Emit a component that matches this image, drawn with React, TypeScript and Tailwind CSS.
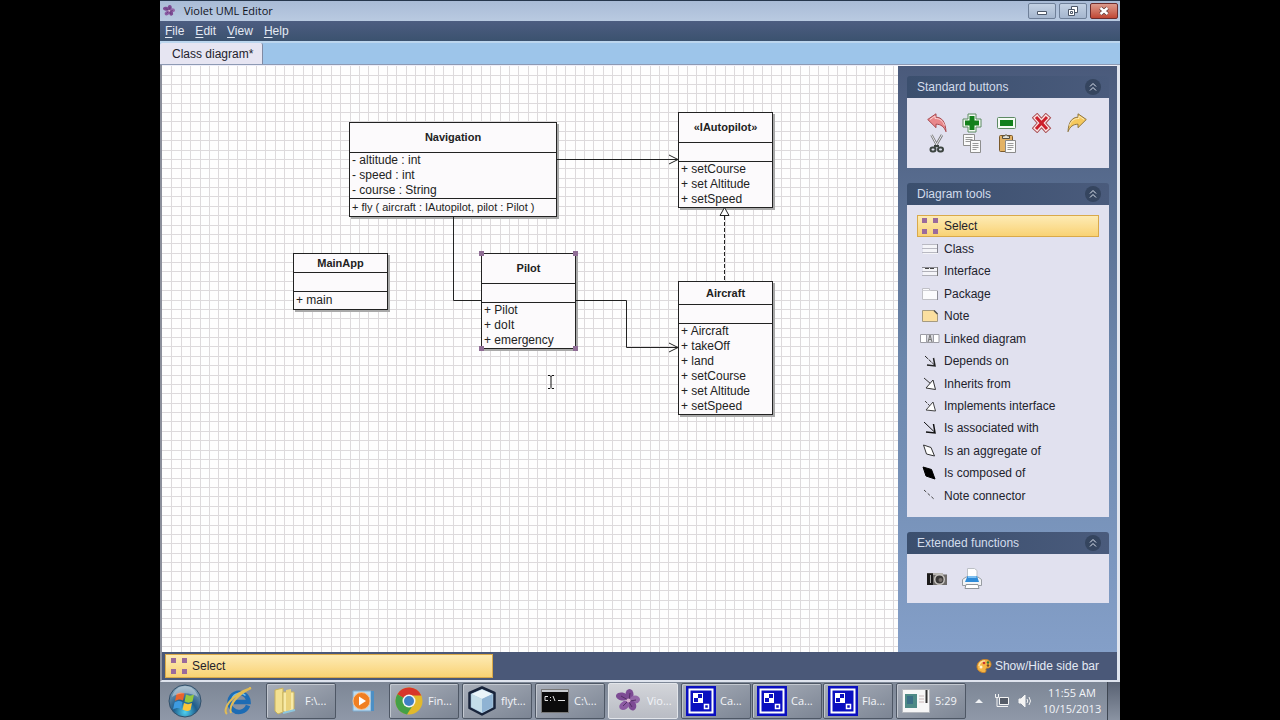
import React, { useState } from 'react';
import { clsx } from 'clsx';

interface UmlNode {
  id: string;
  name: string;
  position: string;
  header: string;
  attributes: string[];
  methods: string[];
  selected?: boolean;
}

const nodes: UmlNode[] = [
  {
    id: 'navigation',
    name: 'Navigation',
    position: 'left-[187px] top-[56px] w-[208px]',
    header: 'h-[30px]',
    attributes: ['- altitude : int', '- speed : int', '- course : String'],
    methods: ['+ fly ( aircraft : IAutopilot, pilot : Pilot )'],
  },
  {
    id: 'autopilot',
    name: '«IAutopilot»',
    position: 'left-[516px] top-[46px] w-[95px]',
    header: 'h-[30px]',
    attributes: [],
    methods: ['+ setCourse', '+ set Altitude', '+ setSpeed'],
  },
  {
    id: 'main-app',
    name: 'MainApp',
    position: 'left-[131px] top-[187px] w-[95px]',
    header: 'h-[19px]',
    attributes: [],
    methods: ['+ main'],
  },
  {
    id: 'pilot',
    name: 'Pilot',
    position: 'left-[319px] top-[187px] w-[95px]',
    header: 'h-[30px]',
    attributes: [],
    methods: ['+ Pilot', '+ doIt', '+ emergency'],
    selected: true,
  },
  {
    id: 'aircraft',
    name: 'Aircraft',
    position: 'left-[516px] top-[215px] w-[95px]',
    header: 'h-[23px]',
    attributes: [],
    methods: ['+ Aircraft', '+ takeOff', '+ land', '+ setCourse', '+ set Altitude', '+ setSpeed'],
  },
];

const GRID_STEP = 9.375;
const columns = Array.from({ length: 240 }, (_, i) => Math.floor(9.9 + i * GRID_STEP));
const rows = Array.from({ length: 160 }, (_, i) => Math.floor(9 + i * GRID_STEP));

/* ---------- Tool icons ---------- */

const SelectIcon = () => (
  <svg className="h-[18px] w-5" viewBox="0 0 20 18" fill="#9a6a9c">
    <path d="M2 1h5v5H2zM13 1h5v5h-5zM2 12h5v5H2zM13 12h5v5h-5z" />
  </svg>
);

const ClassIcon = () => (
  <svg className="h-[18px] w-5" viewBox="0 0 20 18" shapeRendering="crispEdges">
    <path d="M2.500 4.500h15v9h-15z" fill="#f4f4f8" />
    <path d="M2 4.500h15M2 8.500h15M2 12.500h15" stroke="#b9b9c2" />
    <path d="M17.500 4v9" stroke="#85858f" />
  </svg>
);

const InterfaceIcon = () => (
  <svg className="h-[18px] w-5" viewBox="0 0 20 18" shapeRendering="crispEdges">
    <path d="M2.500 4.500h15v9h-15z" fill="#f4f4f8" />
    <path d="M2 9.500h15M2 13.500h15" stroke="#b0b0b8" />
    <path d="M2 5.500h15" stroke="#8a8a92" />
    <path d="M5 6.500h10" stroke="#444" strokeDasharray="4 1" />
    <path d="M17.500 5v9" stroke="#777" />
  </svg>
);

const PackageIcon = () => (
  <svg className="h-[18px] w-5" viewBox="0 0 20 18">
    <path d="M2.500 14.500v-11h7v2h8v9z" fill="#fbfbfd" stroke="#c0c0c6" />
    <path d="M2.500 5.500h8" stroke="#d0d0d6" />
    <path d="M17.500 6v9" stroke="#8d8d96" />
  </svg>
);

const NoteIcon = () => (
  <svg className="h-[18px] w-5" viewBox="0 0 20 18">
    <path d="M2.500 3.500h12l3 3v8h-15z" fill="#fbdf9f" stroke="#a59a80" />
    <path d="M14 3.500l3.500 3.500" stroke="#555" strokeWidth="1.500" />
  </svg>
);

const LinkedIcon = () => (
  <svg className="h-[18px] w-5" viewBox="0 0 20 18">
    <path d="M.5 4.500h6v8h-6zM13.500 4.500h5.500v8h-5.500z" fill="#fff" stroke="#9c9ca4" />
    <path d="M6.500 4.500h7v8h-7z" fill="#d9d9de" stroke="#9c9ca4" />
    <path d="M8 12l2-7 2 7M9 9.500h2" fill="none" stroke="#777" />
  </svg>
);

const DependsIcon = () => (
  <svg className="h-[18px] w-5" viewBox="0 0 20 18" fill="none" stroke="#222">
    <path d="M5 4l10 9.500" strokeDasharray="4 1" />
    <path d="M13.500 6l1.500 8-8-1" strokeWidth="1.500" />
  </svg>
);

const InheritsIcon = () => (
  <svg className="h-[18px] w-5" viewBox="0 0 20 18" fill="none" stroke="#333">
    <path d="M4 3l7 6" />
    <path d="M13 5l2.500 9.500L6 13z" fill="#fff" />
  </svg>
);

const ImplementsIcon = () => (
  <svg className="h-[18px] w-5" viewBox="0 0 20 18" fill="none" stroke="#444">
    <path d="M5 4l5 5" strokeDasharray="3 1" />
    <path d="M13 5l2.500 9L6 13z" fill="#fff" />
  </svg>
);

const AssociatedIcon = () => (
  <svg className="h-[18px] w-5" viewBox="0 0 20 18" fill="none" stroke="#111">
    <path d="M4 3l11 10.500" />
    <path d="M13.500 5l1.500 9-9-1" strokeWidth="1.500" />
  </svg>
);

const AggregateIcon = () => (
  <svg className="h-[18px] w-5" viewBox="0 0 20 18">
    <path d="M3.500 3l7.500 2.500 3.500 8.500-8-2z" fill="#fff" stroke="#333" />
  </svg>
);

const ComposedIcon = () => (
  <svg className="h-[18px] w-5" viewBox="0 0 20 18">
    <path d="M3 3l8.500 2.500 3.500 9.500-9-3z" fill="#000" stroke="#000" />
  </svg>
);

const ConnectorIcon = () => (
  <svg className="h-[18px] w-5" viewBox="0 0 20 18">
    <path d="M4 3l11 10" stroke="#444" strokeDasharray="3 2" />
  </svg>
);

const tools = [
  { label: 'Select', Icon: SelectIcon },
  { label: 'Class', Icon: ClassIcon },
  { label: 'Interface', Icon: InterfaceIcon },
  { label: 'Package', Icon: PackageIcon },
  { label: 'Note', Icon: NoteIcon },
  { label: 'Linked diagram', Icon: LinkedIcon },
  { label: 'Depends on', Icon: DependsIcon },
  { label: 'Inherits from', Icon: InheritsIcon },
  { label: 'Implements interface', Icon: ImplementsIcon },
  { label: 'Is associated with', Icon: AssociatedIcon },
  { label: 'Is an aggregate of', Icon: AggregateIcon },
  { label: 'Is composed of', Icon: ComposedIcon },
  { label: 'Note connector', Icon: ConnectorIcon },
];

/* ---------- Standard button icons ---------- */

const UndoIcon = () => (
  <svg className="h-5 w-5" viewBox="0 0 20 20">
    <path d="M.7 6.500L9 .8v3.400c6 0 9.500 5 10 14.500-2-5-5-7.500-10-7.500v3.500z" fill="#e9878b" stroke="#a84a50" strokeLinejoin="round" />
    <path d="M3 6.500L8 3v2.500c5 0 8 2.500 9.500 7" fill="none" stroke="#fbd3d3" />
  </svg>
);

const ZoomInIcon = () => (
  <svg className="h-5 w-5" viewBox="0 0 20 20">
    <path d="M6 1h8v5h5v8h-5v5H6v-5H1V6h5z" fill="#f4fbf4" stroke="#5d8a63" strokeLinejoin="round" />
    <path d="M7.500 3h5v4.500H17v5h-4.500V17h-5v-4.500H3v-5h4.500z" fill="#12801c" />
  </svg>
);

const ZoomOutIcon = () => (
  <svg className="h-5 w-5" viewBox="0 0 20 20">
    <rect x=".5" y="4.500" width="18" height="11" rx="1" fill="#f4fbf4" stroke="#5d8a63" />
    <path d="M3 7h13v6H3z" fill="#12801c" />
  </svg>
);

const DeleteIcon = () => (
  <svg className="h-5 w-5" viewBox="0 0 20 20">
    <path d="M5 5l9 10M14 5L5 15" stroke="#a84c50" strokeWidth="7.500" strokeLinecap="square" />
    <path d="M5 5l9 10M14 5L5 15" stroke="#fbe6e6" strokeWidth="5.500" strokeLinecap="square" />
    <path d="M5 5l9 10M14 5L5 15" stroke="#cc1f2b" strokeWidth="3" strokeLinecap="square" />
  </svg>
);

const RedoIcon = () => (
  <svg className="h-5 w-5" viewBox="0 0 20 20">
    <path d="M19.300 6.500L11 .8v3.400C5 4.200 1.500 9.200 1 18.700c2-5 5-7.500 10-7.500v3.500z" fill="#f5c85c" stroke="#8f7640" strokeLinejoin="round" />
    <path d="M17 6.500L12 3v2.500C7 5.500 4 8 2.500 12.500" fill="none" stroke="#fdeab8" />
  </svg>
);

const CutIcon = () => (
  <svg className="h-5 w-5" viewBox="0 0 20 20" fill="none">
    <path d="M4.500 1l6.500 12M15 1L8 13" stroke="#777" strokeWidth="2.500" />
    <path d="M4.500 1l6.500 12M15 1L8 13" stroke="#e9e9ee" strokeWidth="1" />
    <rect x="3.500" y="13.500" width="5" height="4" rx="2" stroke="#3c4440" strokeWidth="2" />
    <rect x="11" y="13.500" width="5" height="4" rx="2" stroke="#3c4440" strokeWidth="2" />
    <path d="M7 12h5" stroke="#3c4440" strokeWidth="2" />
  </svg>
);

const CopyIcon = () => (
  <svg className="h-5 w-5" viewBox="0 0 20 20">
    <path d="M1.500.500h11v11h-11z" fill="#fafafa" stroke="#8e8e8e" />
    <path d="M3.500 3.500h7M3.500 5.500h7M3.500 7.500h7" stroke="#999" />
    <path d="M8.500 6.500h10v12h-10z" fill="#fafafa" stroke="#8e8e8e" />
    <path d="M10.500 9.500h6M10.500 11.500h6M10.500 13.500h6M10.500 15.500h4" stroke="#999" />
  </svg>
);

const PasteIcon = () => (
  <svg className="h-5 w-5" viewBox="0 0 20 20">
    <rect x="2.500" y="1.500" width="13" height="16" rx="1" fill="#e3b265" stroke="#7b5a2b" />
    <path d="M5.500 4.500V2h2L9 .5 10.500 2h2v2.500z" fill="#e4e4dc" stroke="#55503f" />
    <path d="M8.500 6.500h10v12h-10z" fill="#fafafa" stroke="#8a8a8a" />
    <path d="M10.500 9.500h6M10.500 11.500h6M10.500 13.500h6M10.500 15.500h4" stroke="#999" />
  </svg>
);

const CameraIcon = () => (
  <svg className="h-5 w-5" viewBox="0 0 20 20">
    <path d="M0 4h15v1.500h5V16H0z" fill="#6d6a68" />
    <path d="M0 4.500h6V16H0z" fill="#1c1b1b" />
    <path d="M3.500 6v8" stroke="#aaa" />
    <path d="M6 4h10v2H6z" fill="#b7b4b0" />
    <circle cx="12.500" cy="10.500" r="5.500" fill="#c9c6c2" />
    <circle cx="12.500" cy="10.500" r="4" fill="#3a3837" />
    <circle cx="13.500" cy="11" r="2" fill="#77706c" />
  </svg>
);

const PrinterIcon = () => (
  <svg className="h-[21px] w-[22px]" viewBox="0 0 22 21">
    <path d="M5 9L1.500 11.500v6h19v-6L17 9z" fill="#f2f4f6" stroke="#989da3" />
    <path d="M6.500 10.500V.5h7l2.500 2v8z" fill="#fff" stroke="#bcc0c6" />
    <path d="M6.500 8h9.500l2 6H4z" fill="#2f8bd8" />
    <path d="M7 8h8.500v2H7z" fill="#7fc0f0" />
    <path d="M5 16.500h12l1 4H4z" fill="#fff" stroke="#8f949a" />
  </svg>
);

const PaletteIcon = () => (
  <svg className="h-4 w-4" viewBox="0 0 16 16">
    <path d="M1 9C1 4 5 1.500 9 1.500s6 2 6 5-2 3.500-3.500 3.500-2 1-1.500 2.500S8.500 15 6.500 14.500 1 12.500 1 9z" fill="#f5b545" stroke="#c9822a" />
    <path d="M3 8c.5-3 3-5 6-5" stroke="#fde0a0" strokeWidth="1.500" fill="none" />
    <circle cx="5" cy="9" r="1.500" fill="#fff3cf" />
    <circle cx="8" cy="5" r="1.300" fill="#c33" />
    <circle cx="12" cy="4.500" r="1.300" fill="#357a3a" />
    <circle cx="12" cy="7.500" r="1.300" fill="#7a4b2a" />
  </svg>
);

const VioletIcon = ({ className }: { className: string }) => (
  <svg className={className} viewBox="0 0 24 24">
    <g fill="#7d4b94">
      <ellipse cx="6" cy="7.500" rx="6" ry="4" transform="rotate(10 6 7)" />
      <ellipse cx="13.500" cy="5.500" rx="4" ry="5.500" />
      <ellipse cx="19" cy="10.500" rx="5" ry="4" fill="#9468a8" />
      <ellipse cx="16" cy="16.500" rx="4" ry="5" transform="rotate(-20 16 16)" />
      <ellipse cx="8" cy="16.500" rx="5.500" ry="4" transform="rotate(-35 8 16)" fill="#8c5ba3" />
    </g>
    <path d="M12 11L5 7M13 11l1-7M14 12l6-1M13 13l3 5M11 13l-4 4" stroke="#543066" />
    <circle cx="12.500" cy="11.500" r="2" fill="#d8b2cf" />
  </svg>
);

const standardButtons = [
  { label: 'Undo', Icon: UndoIcon },
  { label: 'Zoom in', Icon: ZoomInIcon },
  { label: 'Zoom out', Icon: ZoomOutIcon },
  { label: 'Delete', Icon: DeleteIcon },
  { label: 'Redo', Icon: RedoIcon },
  { label: 'Cut', Icon: CutIcon },
  { label: 'Copy', Icon: CopyIcon },
  { label: 'Paste', Icon: PasteIcon },
];

const extendedButtons = [
  { label: 'Export image', Icon: CameraIcon },
  { label: 'Print', Icon: PrinterIcon },
];

/* ---------- Taskbar icons ---------- */

const StartOrb = () => (
  <svg className="h-[34px] w-[34px]" viewBox="0 0 34 34">
    <defs>
      <radialGradient id="orb" cx="50%" cy="85%" r="80%">
        <stop offset="0" stopColor="#4fd0f0" />
        <stop offset=".45" stopColor="#1f5d8c" />
        <stop offset="1" stopColor="#7f9fb6" />
      </radialGradient>
    </defs>
    <circle cx="17" cy="17" r="16" fill="url(#orb)" stroke="#33506a" />
    <path d="M8.500 10c3-2 5-2 8-.5l-1.500 7c-3-1.500-5-1-8 .5z" fill="#e8642c" />
    <path d="M18 10.500c3 1.500 5 1.500 8 0l-1.500 7c-3 1.500-5 1.500-8 0z" fill="#93c83e" />
    <path d="M6.500 18.500c3-1.500 5-2 8-.5l-1.500 7c-3-1.500-5-1-8 .5z" fill="#3d9be0" />
    <path d="M16 19c3 1.500 5 1.500 8 0l-1.500 7c-3 1.500-5 1-8-.5z" fill="#fbc63a" />
    <path d="M4 13C6 5 12 2 17 2s11 3 13 11C22 8 12 8 4 13z" fill="#fff" opacity=".35" />
  </svg>
);

const ExplorerIcon = () => (
  <svg className="h-[30px] w-[30px]" viewBox="0 0 30 30" fill="none">
    <path d="M25 19.500A9.500 9.500 0 1 1 25.500 16H11" stroke="#1d6cb4" strokeWidth="4.500" />
    <path d="M9 12.500a8.500 8.500 0 0 1 13.500-3" stroke="#6fc0ee" strokeWidth="1.500" />
    <path d="M4 28C-1 24 7 9 28 2c-13 6-23 17-20 25" stroke="#e0bb55" strokeWidth="2" />
  </svg>
);

const FolderIcon = () => (
  <svg className="h-7 w-7" viewBox="0 0 28 28">
    <path d="M3 3l8-2v24l-5 2-3-3z" fill="#f3e191" stroke="#c9b25c" />
    <path d="M11 5h11v18l-8 3-3-2z" fill="#f7eaa8" stroke="#c9b25c" />
    <path d="M14 3l5-1v20l-5 4z" fill="#ead27a" />
    <path d="M11 26l12-3" stroke="#8dc6de" strokeWidth="2" />
  </svg>
);

const MediaIcon = () => (
  <svg className="h-6 w-6" viewBox="0 0 24 24">
    <path d="M2 2h18v20H2z" fill="#bcdcf2" stroke="#7dabd0" />
    <path d="M20 2h3v20h-3z" fill="#4d8fc4" />
    <circle cx="10.500" cy="12" r="8.500" fill="#f07f22" stroke="#f8c18e" />
    <path d="M8 7.500l7 4.500-7 4.500z" fill="#fff" />
  </svg>
);

const ChromeIcon = () => (
  <svg className="h-7 w-7" viewBox="0 0 28 28">
    <circle cx="14" cy="14" r="13.500" fill="#e2b92c" />
    <path d="M14 14L2.300 7.250A13.500 13.500 0 0 1 26.300 8.500H14z" fill="#d8352b" />
    <path d="M14 14L2.300 7.250A13.500 13.500 0 0 0 12 27.400l6-9.400z" fill="#45a046" />
    <circle cx="14" cy="14" r="6.500" fill="#f4f4f4" />
    <circle cx="14" cy="14" r="5" fill="#3f7fc6" />
  </svg>
);

const CubeIcon = () => (
  <svg className="h-[30px] w-7" viewBox="0 0 28 30">
    <path d="M14 1.500L26.500 7v15L14 28.500 1.500 22V7z" fill="#a9c6dd" stroke="#18233a" strokeWidth="2.500" strokeLinejoin="round" />
    <path d="M14 3.500L24.500 8 14 13 3.500 8z" fill="#eaf4f9" />
    <path d="M14 13l10.500-5v13L14 26.500z" fill="#8fb3d3" />
    <path d="M3.500 8L14 13v13.500L3.500 21z" fill="#c4dde9" />
  </svg>
);

const ConsoleIcon = () => (
  <svg className="h-6 w-7" viewBox="0 0 28 24">
    <path d="M.5.500h27v23H.5z" fill="#0b0b0b" stroke="#777" />
    <path d="M1 1h26v2H1z" fill="#c9ccd0" />
    <path d="M7 7.500H4v4h3M9 8.500h1M9 11.500h1M12 7l2 5M17 11.500h7" stroke="#e4e4e4" fill="none" />
  </svg>
);

const CamIcon = () => (
  <svg className="h-[30px] w-[30px]" viewBox="0 0 30 30">
    <path d="M0 0h30v30H0z" fill="#0a0fc0" />
    <path d="M3.500 3.500h23v23h-23z" fill="none" stroke="#fff" strokeWidth="2" />
    <path d="M7 7h10v10H7z" fill="#fff" />
    <path d="M12 8h4v4h-4zM8 12h4v4H8z" fill="#0a0fc0" />
    <path d="M18.500 18.500h4v4h-4z" fill="none" stroke="#fff" strokeWidth="1.500" />
  </svg>
);

const RecorderIcon = () => (
  <svg className="h-6 w-7" viewBox="0 0 28 24">
    <path d="M.5.500h27v23H.5z" fill="#f7f7f7" stroke="#b5b8be" />
    <path d="M3 5h12v14H3z" fill="#4e8a86" />
    <path d="M5 7h6v8H5z" fill="#3b6f86" />
    <path d="M17 7h5M17 10h5M17 13h5" stroke="#c9b8b8" />
    <path d="M24.500 1v13" stroke="#333" strokeWidth="2" />
  </svg>
);

const windows = [
  { label: 'F:\\...', Icon: FolderIcon },
  { label: 'Fin...', Icon: ChromeIcon },
  { label: 'flyt...', Icon: CubeIcon },
  { label: 'C:\\...', Icon: ConsoleIcon },
  { label: 'Vio...', Icon: () => <VioletIcon className="h-6 w-6" />, active: true },
  { label: 'Ca...', Icon: CamIcon },
  { label: 'Ca...', Icon: CamIcon, grouped: true },
  { label: 'Fla...', Icon: CamIcon, grouped: true },
  { label: '5:29', Icon: RecorderIcon },
];

/* ---------- Pieces ---------- */

function Panel({ title, children }: { title: string; children: React.ReactNode }) {
  return (
    <section>
      <h2 className="flex h-[22px] items-center justify-between rounded-t-[3px] bg-gradient-to-r from-[#3b4f6e] to-[#4a5b7c] pr-2 pl-[10px] text-xs text-[#d3dcec]">
        {title}
        <button aria-label={`Collapse ${title}`} className="flex h-4 w-4 items-center justify-center rounded-full bg-[#35455f]">
          <svg className="h-[10px] w-[10px]" viewBox="0 0 10 10" fill="none" stroke="#dfe5f0">
            <path d="M2 4.500l3-3 3 3M2 8.500l3-3 3 3" />
          </svg>
        </button>
      </h2>
      <div className="bg-[#e1e1ef]">{children}</div>
    </section>
  );
}

function ClassBox({ node }: { node: UmlNode }) {
  const hasSignature = node.methods.some((method) => method.includes('('));

  return (
    <article className={clsx('absolute border border-[#222] bg-[#fcfafc] text-xs leading-[15px] text-[#222] shadow-[2px_2px_0_#a9a9a9]', node.position)}>
      <h3 className={clsx('flex items-center justify-center border-b border-[#222] text-[11px] font-bold', node.header)}>{node.name}</h3>
      <ul className="min-h-[19px] border-b border-[#222] pl-[2px] whitespace-nowrap">
        {node.attributes.map((attribute) => (
          <li key={attribute}>{attribute}</li>
        ))}
      </ul>
      <ul className={clsx('pl-[2px] leading-[15px] whitespace-nowrap', node.methods.length === 1 && 'py-px', hasSignature && 'text-[11px]')}>
        {node.methods.map((method) => (
          <li key={method}>{method}</li>
        ))}
      </ul>
      {node.selected && (
        <>
          <span className="absolute -top-[3px] -left-[3px] h-[5px] w-[5px] bg-[#8f6d95]" />
          <span className="absolute -top-[3px] -right-[3px] h-[5px] w-[5px] bg-[#8f6d95]" />
          <span className="absolute -bottom-[3px] -left-[3px] h-[5px] w-[5px] bg-[#8f6d95]" />
          <span className="absolute -right-[3px] -bottom-[3px] h-[5px] w-[5px] bg-[#8f6d95]" />
        </>
      )}
    </article>
  );
}

function DiagramCanvas() {
  return (
    <main className="relative min-w-0 flex-1 overflow-hidden bg-[#fefefe]">
      <svg className="absolute inset-0 h-full w-full" shapeRendering="crispEdges" stroke="#dddadc">
        {columns.map((x) => (
          <line key={x} x1={x + 0.5} x2={x + 0.5} y1="0" y2="100%" />
        ))}
        {rows.map((y) => (
          <line key={y} x1="0" x2="100%" y1={y + 0.5} y2={y + 0.5} />
        ))}
      </svg>

      {nodes.map((node) => (
        <ClassBox key={node.id} node={node} />
      ))}

      {/* Edges, arrow heads and the text pointer */}
      <svg className="pointer-events-none absolute inset-0 h-full w-full" fill="none" stroke="#222">
        <path d="M395 93.500H516" />
        <path d="M291.500 151V234.500H319" />
        <path d="M414 234.500H464.500V281.500H516" />
        <path d="M562.500 150V215" strokeDasharray="4 2" />
        <path d="M507 89L516 93.500L507 98" />
        <path d="M507 277L516 281.500L507 286" />
        <path d="M562.500 141.500L567 149.500H558z" fill="#fff" />
        <path d="M386 309.500h2l1 1 1-1h2M389 310v11M386 322.500h2l1-1 1 1h2" stroke="#111" />
      </svg>
    </main>
  );
}

function Taskbar() {
  return (
    <footer className="flex h-[38px] shrink-0 items-stretch bg-gradient-to-b from-[#7d8796] to-[#8f98a8] font-['Open_Sans','Noto_Sans',sans-serif] text-[11px] text-[#f2f4f8]">
      <button aria-label="Start" className="flex w-[50px] items-center justify-center">
        <StartOrb />
      </button>
      <button aria-label="Internet Explorer" className="flex w-[56px] items-center justify-center">
        <ExplorerIcon />
      </button>
      <div className="flex gap-[3px] py-px">
        {windows.map(({ label, Icon, active, grouped }, index) => (
          <React.Fragment key={index}>
            <button
              className={clsx(
                'flex w-[70px] items-center gap-1 rounded-[2px] border pl-1 whitespace-nowrap',
                grouped && '-ml-[2px]',
                active
                  ? 'border-[#e2e5ea] bg-gradient-to-b from-[#d3d5da] to-[#b9bcc4]'
                  : 'border-[#4e5765] bg-gradient-to-br from-[#a9afba] to-[#7c8594] shadow-[inset_1px_1px_0_#c3c8d0]',
              )}
            >
              <span className="flex w-[30px] shrink-0 justify-center">
                <Icon />
              </span>
              {label}
            </button>
            {index === 0 && (
              <button aria-label="Media Player" className="flex w-[47px] items-center justify-center">
                <MediaIcon />
              </button>
            )}
          </React.Fragment>
        ))}
      </div>
      <div className="flex flex-1 items-center justify-end gap-[7px] pr-1">
        <button aria-label="Show hidden icons" className="pr-1">
          <svg className="h-2 w-2" viewBox="0 0 8 8">
            <path d="M0 6l4-4 4 4z" fill="#f0f2f5" />
          </svg>
        </button>
        <svg className="h-4 w-4" viewBox="0 0 16 16" fill="none" stroke="#f4f4f4">
          <path d="M5.500 4.500h9v7h-9zM7 13.500h7" fill="#555c68" />
          <path d="M1.500 1v3.500h3V1M3 4.500v9h4" />
        </svg>
        <svg className="h-4 w-4" viewBox="0 0 16 16" fill="none" stroke="#f4f4f4">
          <path d="M2 6h2l4-4v12l-4-4H2z" fill="#f4f4f4" />
          <path d="M10 6q1.500 2 0 4M12 4q3 4 0 8" />
        </svg>
      </div>
      <time className="flex w-[70px] flex-col justify-center text-center leading-4">
        <span>11:55 AM</span>
        <span>10/15/2013</span>
      </time>
      <button aria-label="Show desktop" className="w-[13px] border-l border-[#3e4652] bg-gradient-to-b from-[#596273] to-[#8a93a2]" />
    </footer>
  );
}

export default function App() {
  const [tool, setTool] = useState('Select');

  return (
    <div className="flex h-screen justify-center bg-black font-['Liberation_Sans',Arial,sans-serif]">
      <div className="flex w-3/4 flex-col overflow-hidden">
        <header className="flex h-[21px] shrink-0 items-center border-t border-[#26364c] bg-gradient-to-b from-[#a9bbd6] to-[#b9cae1] pr-[2px] pl-[3px]">
          <VioletIcon className="h-3 w-3" />
          <h1 className="ml-[9px] flex-1 font-['Open_Sans','Noto_Sans',sans-serif] text-[11px] text-[#10131c]">Violet UML Editor</h1>
          <div className="flex gap-[3px]">
            <button aria-label="Minimize" className="flex h-4 w-7 items-center justify-center rounded-[2px] border border-[#6f8099] bg-gradient-to-b from-[#c3d1e3] to-[#a5b6ce]">
              <svg className="h-3 w-3" viewBox="0 0 12 12">
                <path d="M1.500 6.500h9v3h-9z" fill="#fff" stroke="#4c5768" />
              </svg>
            </button>
            <button aria-label="Restore" className="flex h-4 w-7 items-center justify-center rounded-[2px] border border-[#6f8099] bg-gradient-to-b from-[#c3d1e3] to-[#a5b6ce]">
              <svg className="h-3 w-3" viewBox="0 0 12 12" fill="#fff" stroke="#4c5768">
                <path d="M4.500 1.500h6v6h-6z" />
                <path d="M1.500 4.500h6v6h-6zM3.500 6.500h2v2h-2z" />
              </svg>
            </button>
            <button aria-label="Close" className="flex h-4 w-7 items-center justify-center rounded-[2px] border border-[#6d2c2c] bg-gradient-to-b from-[#dc9a8c] to-[#c04634]">
              <svg className="h-3 w-3" viewBox="0 0 12 12">
                <path d="M2.500 3l7 6M9.500 3l-7 6" stroke="#5d3a3a" strokeWidth="4" />
                <path d="M2.500 3l7 6M9.500 3l-7 6" stroke="#fff" strokeWidth="2.500" />
              </svg>
            </button>
          </div>
        </header>

        <nav className="flex h-5 shrink-0 items-center gap-[11px] bg-gradient-to-b from-[#4d5d81] to-[#3b526f] pl-[5px] text-xs text-[#e4eaf4]">
          {['File', 'Edit', 'View', 'Help'].map((item) => (
            <button key={item}>
              <span className="underline underline-offset-2">{item[0]}</span>
              {item.slice(1)}
            </button>
          ))}
        </nav>

        <div className="flex h-6 shrink-0 items-end border-t-2 border-b border-t-[#bcd6ee] border-b-[#8d9ab4] bg-[#9dc5ea]">
          <button className="h-[21px] w-[103px] rounded-t-[2px] border-r border-[#7f8aa3] bg-[#e6e5f2] pl-3 text-left text-xs text-[#22222c]">
            Class diagram*
          </button>
        </div>

        <div className="flex min-h-0 flex-1 border-r-[3px] border-b-2 border-l-2 border-r-[#dfe4ee] border-b-[#dfe4ee] border-l-[#8b8f9b]">
          <div className="flex min-w-0 flex-1 flex-col">
            <div className="flex min-h-0 flex-1 border-t border-[#eeeef8]">
              <DiagramCanvas />

              <aside className="flex w-[219px] shrink-0 flex-col gap-[15px] bg-gradient-to-b from-[#4a5a7b] via-[#6b86ab] to-[#849fc8] pt-[10px] pr-2 pl-[9px]">
                <Panel title="Standard buttons">
                  <div className="grid auto-rows-[21px] grid-cols-5 py-[14px] pr-[15px] pl-3">
                    {standardButtons.map(({ label, Icon }) => (
                      <button key={label} aria-label={label} className="flex items-center justify-center">
                        <Icon />
                      </button>
                    ))}
                  </div>
                </Panel>

                <Panel title="Diagram tools">
                  <ul className="flex h-[312px] flex-col px-[10px] py-[10px]">
                    {tools.map(({ label, Icon }) => (
                      <li key={label} className="flex flex-1">
                        <button
                          onClick={() => setTool(label)}
                          className={clsx(
                            'flex w-full items-center gap-1 border pl-[2px] text-xs text-[#22222c]',
                            tool === label
                              ? 'border-[#d9a94a] bg-gradient-to-b from-[#fdebb4] to-[#f9d273]'
                              : 'border-transparent',
                          )}
                        >
                          <Icon />
                          {label}
                        </button>
                      </li>
                    ))}
                  </ul>
                </Panel>

                <Panel title="Extended functions">
                  <div className="grid auto-rows-[21px] grid-cols-5 py-[14px] pr-[15px] pl-3">
                    {extendedButtons.map(({ label, Icon }) => (
                      <button key={label} aria-label={label} className="flex items-center justify-center">
                        <Icon />
                      </button>
                    ))}
                  </div>
                </Panel>
              </aside>
            </div>

            <div className="flex h-7 shrink-0 items-center justify-between bg-[#4a5878] pr-[18px] pl-[3px] text-xs">
              <div className="flex h-6 w-[328px] items-center gap-[3px] border border-[#d9a94a] bg-gradient-to-b from-[#fdebb4] to-[#f9d273] pl-[3px] text-[#22222c]">
                <SelectIcon />
                {tool}
              </div>
              <button className="flex items-center gap-[3px] text-[#e4eaf4]">
                <PaletteIcon />
                Show/Hide side bar
              </button>
            </div>
          </div>
        </div>

        <Taskbar />
      </div>
    </div>
  );
}
